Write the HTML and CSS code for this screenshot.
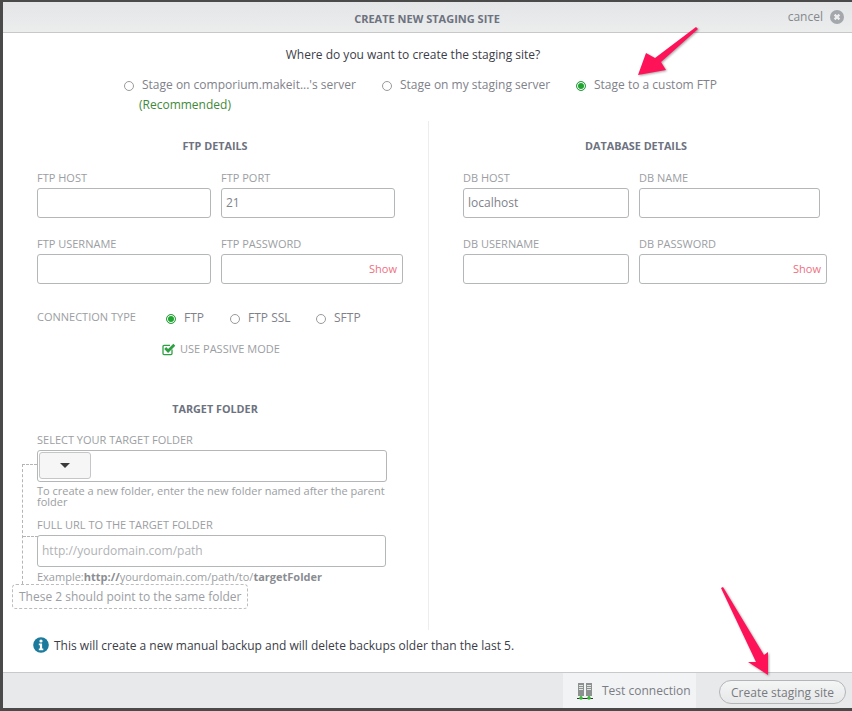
FILE: index.html
```html
<!DOCTYPE html>
<html lang="en">
<head>
<meta charset="utf-8">
<title>Create new staging site</title>
<link rel="stylesheet" href="styles.css">
</head>
<body>
<div class="modal">
  <header class="head">
    <h1 class="title">CREATE NEW STAGING SITE</h1>
    <div class="cancel">cancel
      <svg class="cancel-icon" width="14" height="14" viewBox="0 0 14 14"><circle cx="7" cy="7" r="7" fill="#a4a7ab"/><path d="M4.6 4.6l4.8 4.8M9.4 4.6l-4.8 4.8" stroke="#eee" stroke-width="2.2"/></svg>
    </div>
  </header>
  <main class="body">
    <p class="question">Where do you want to create the staging site?</p>
    <div class="options">
      <div class="option opt-a">
        <label class="radio-row"><span class="radio"></span>Stage on comporium.makeit...'s server</label>
        <div class="rec">(Recommended)</div>
      </div>
      <label class="radio-row opt-b"><span class="radio"></span>Stage on my staging server</label>
      <label class="radio-row opt-c"><span class="radio on"></span>Stage to a custom FTP</label>
    </div>
    <div class="columns">
      <section class="col-left">
        <h2 class="sec sec-ftp">FTP DETAILS</h2>
        <div class="row r1">
          <div class="field w174"><label>FTP HOST</label><div class="input"></div></div>
          <div class="field w174"><label>FTP PORT</label><div class="input">21</div></div>
        </div>
        <div class="row r2">
          <div class="field w174"><label>FTP USERNAME</label><div class="input"></div></div>
          <div class="field w182"><label>FTP PASSWORD</label><div class="input"><span class="show">Show</span></div></div>
        </div>
        <div class="conn">
          <span class="conn-label">CONNECTION TYPE</span>
          <label class="radio-row c1"><span class="radio on"></span>FTP</label>
          <label class="radio-row c2"><span class="radio"></span>FTP SSL</label>
          <label class="radio-row c3"><span class="radio"></span>SFTP</label>
        </div>
        <div class="passive">
          <svg class="check" width="14" height="13" viewBox="0 0 14 13"><path d="M10 6.5V10.6a1 1 0 0 1-1 1H2a1 1 0 0 1-1-1V3.4a1 1 0 0 1 1-1h6" fill="none" stroke="#2ea043" stroke-width="1.3"/><path d="M3.2 5l2.9 2.9 6.2-6.2" fill="none" stroke="#2ea043" stroke-width="2.8"/></svg>
          USE PASSIVE MODE
        </div>
        <h2 class="sec sec-target">TARGET FOLDER</h2>
        <div class="target">
          <label class="t-label">SELECT YOUR TARGET FOLDER</label>
          <div class="input folder"><span class="drop"><span class="caret"></span></span></div>
          <p class="hint">To create a new folder, enter the new folder named after the parent folder</p>
          <label class="t-label url-label">FULL URL TO THE TARGET FOLDER</label>
          <div class="input url">http://yourdomain.com/path</div>
          <p class="example">Example:<b>http://</b>yourdomain.com/path/to/<b>targetFolder</b></p>
          <div class="bracket"></div>
          <div class="note">These 2 should point to the same folder</div>
        </div>
      </section>
      <section class="col-right">
        <h2 class="sec sec-db">DATABASE DETAILS</h2>
        <div class="row r1 db">
          <div class="field w166"><label>DB HOST</label><div class="input">localhost</div></div>
          <div class="field w181"><label>DB NAME</label><div class="input"></div></div>
        </div>
        <div class="row r2 db">
          <div class="field w166"><label>DB USERNAME</label><div class="input"></div></div>
          <div class="field w188"><label>DB PASSWORD</label><div class="input"><span class="show">Show</span></div></div>
        </div>
      </section>
    </div>
    <div class="info">
      <svg width="16" height="16" viewBox="0 0 16 16"><circle cx="8" cy="8" r="7.8" fill="#1c7a9c"/><circle cx="8" cy="4" r="1.6" fill="#fff"/><path d="M5.8 6.6h3.3v5h1.2v1.6H5.8v-1.6h1.1V8.2H5.8z" fill="#fff"/></svg>
      <span>This will create a new manual backup and will delete backups older than the last 5.</span>
    </div>
  </main>
  <footer class="foot">
    <div class="test">
      <svg width="16" height="17" viewBox="0 0 16 17"><rect x="1" y="0" width="6" height="13" fill="#8d9190"/><rect x="9" y="0" width="6" height="13" fill="#8d9190"/><path d="M2 2.5h4M2 4.5h4M2 6.5h4M10 2.5h4M10 4.5h4M10 6.5h4" stroke="#e4e6e6"/><path d="M4 13v2M12 13v2" stroke="#555"/><path d="M0 15.5h16" stroke="#333"/><circle cx="4" cy="15" r="1.8" fill="#2fc22f"/><circle cx="12" cy="15" r="1.8" fill="#2fc22f"/></svg>
      <span>Test connection</span>
    </div>
    <button class="create">Create staging site</button>
  </footer>
</div>
<svg class="arrow arrow-top" width="62" height="50" viewBox="0 0 62 50"><path d="M59 0L61 2L24 35L29 43L1 48L9 26L18 31Z" fill="#ff1358"/></svg>
<svg class="arrow arrow-bottom" width="50" height="90" viewBox="0 0 50 90"><path d="M0 1L2 0L43 68L47 65L47 88L27 75L35 75Z" fill="#ff1358"/></svg>
</body>
</html>
```
FILE: styles.css
```css
* { box-sizing: border-box; }
html, body { margin: 0; height: 711px; overflow: hidden; }
body {
  background: #4a4a4a;
  padding: 2px 0 3px 3px;
  font-family: "Open Sans", sans-serif;
  font-size: 12px;
  color: #7a7d85;
  position: relative;
}
.modal { height: 706px; background: #fff; display: flex; flex-direction: column; }
.head {
  height: 31px;
  flex: none;
  background: linear-gradient(#e3e5e7, #eceded);
  border-bottom: 1px solid #c6c8ca;
  display: flex;
  align-items: center;
  justify-content: center;
  position: relative;
}
.title { margin: 3px 1px 0 0; font-size: 11px; line-height: 14px; font-weight: 700; color: #6d7280; }
.cancel {
  position: absolute;
  right: 8px;
  top: 7px;
  font-size: 12px;
  line-height: 16px;
  color: #85888d;
  display: flex;
  align-items: center;
  gap: 7px;
}
.body { flex: 1; display: flex; flex-direction: column; min-height: 0; }
.question { margin: 13px 0 0; text-align: center; padding-right: 29px; font-size: 12px; line-height: 17px; color: #3b3d48; }
.options { display: flex; height: 39px; margin-top: 13px; }
.radio-row { display: flex; align-items: center; font-size: 12px; line-height: 17px; color: #7f828a; height: 17px; }
.radio {
  width: 10px;
  height: 10px;
  border: 1px solid #9a9a9a;
  border-radius: 50%;
  background: #fff;
  margin-right: 8px;
  flex: none;
  position: relative;
  top: 1px;
}
.radio.on { border-color: #2ea043; background: #1fa52f; box-shadow: inset 0 0 0 1px #fff; }
.opt-a { margin-left: 121px; width: 258px; }
.opt-b { margin-left: 0; width: 194px; align-self: flex-start; }
.opt-c { align-self: flex-start; }
.rec { margin: 3px 0 0 15px; font-size: 12px; line-height: 17px; color: #3f8a3a; }
.columns { display: flex; height: 509px; margin-top: 6px; }
.col-left { width: 426px; border-right: 1px solid #eceded; padding-left: 34px; flex: none; }
.col-right { padding-left: 34px; flex: 1; }
.sec { margin: 0; font-size: 10.8px; line-height: 14px; font-weight: 700; color: #6d7280; text-align: center; }
.sec-ftp { padding-top: 18px; width: 356px; height: 32px; }
.sec-db { padding-top: 18px; width: 346px; height: 32px; }
.row { display: flex; gap: 10px; }
.r1 { margin-top: 18px; }
.r2 { margin-top: 19px; }
.field { flex: none; }
.field label, .t-label { display: block; font-size: 11px; line-height: 14px; color: #9b9ea2; height: 17px; }
.w174 { width: 174px; }
.w182 { width: 182px; }
.w166 { width: 166px; }
.w181 { width: 181px; }
.w188 { width: 188px; }
.input {
  height: 30px;
  border: 1px solid #b3b7b8;
  border-radius: 3px;
  background: #fff;
  padding: 0 4px;
  font-size: 12px;
  line-height: 28px;
  color: #80838b;
  position: relative;
  text-align: left;
}
.show { position: absolute; right: 5px; top: 0; font-size: 11px; color: #ee6f82; }
.conn { display: flex; align-items: center; margin-top: 24px; height: 17px; position: relative; }
.conn-label { font-size: 11px; color: #9b9ea2; width: 129px; flex: none; }
.conn .radio-row { font-size: 12px; padding-top: 2px; }
.c1 { width: 64px; }
.c2 { width: 86px; }
.conn .radio { margin-right: 8px; }
.passive { display: flex; align-items: center; gap: 4px; margin: 16px 0 0 125px; font-size: 11px; line-height: 14px; color: #9b9ea2; height: 16px; }
.sec-target { width: 356px; margin-top: 45px; }
.target { position: relative; margin-top: 17px; width: 350px; }
.folder { height: 32px; width: 350px; }
.drop {
  position: absolute;
  left: 1px;
  top: 1px;
  width: 52px;
  height: 27px;
  border: 1px solid #c4c6c8;
  border-radius: 3px;
  background: #f6f6f6;
  display: flex;
  align-items: center;
  justify-content: center;
}
.caret { width: 0; height: 0; border: 5px solid transparent; border-top-color: #3b3b3b; border-bottom: 0; }
.hint { margin: 3px 0 0; font-size: 11px; line-height: 11px; color: #9b9ea2; width: 350px; }
.url-label { margin-top: 11px; }
.url { height: 32px; width: 349px; color: #b0b2b5; line-height: 30px; }
.example { margin: 3px 0 0; font-size: 11px; line-height: 14px; color: #9b9ea2; }
.example b { color: #8a8d92; }
.bracket {
  position: absolute;
  left: -15px;
  top: 31px;
  width: 15px;
  height: 120px;
  border: 1px dashed #b5b5b5;
  border-right: 0;
  border-bottom: 0;
}
.bracket::after {
  content: "";
  position: absolute;
  left: 0;
  top: 71px;
  width: 15px;
  border-top: 1px dashed #b5b5b5;
}
.note {
  position: absolute;
  left: -25px;
  top: 151px;
  height: 25px;
  width: 236px;
  border: 1px dashed #bdbdbd;
  border-radius: 4px;
  padding-left: 6px;
  font-size: 12px;
  line-height: 23px;
  color: #9b9ea2;
  white-space: nowrap;
}
.info { display: flex; align-items: center; gap: 5px; margin: 5px 0 0 30px; height: 20px; font-size: 12px; color: #3b3d48; }
.foot {
  margin-top: auto;
  height: 36px;
  flex: none;
  background: #e8e9eb;
  border-top: 1px solid #c8c9cb;
  display: flex;
  justify-content: flex-end;
  padding-right: 6px;
}
.test {
  width: 133px;
  height: 35px;
  background: #f2f3f4;
  display: flex;
  align-items: center;
  gap: 9px;
  padding: 2px 0 0 14px;
  font-size: 12px;
  color: #7a7d85;
  margin-right: 23px;
  white-space: nowrap;
}
.test span { position: relative; top: -1px; }
.create {
  width: 127px;
  height: 24px;
  margin-top: 7px;
  border: 1px solid #b3b5b7;
  border-radius: 12px;
  background: linear-gradient(#f4f5f5, #e6e7e8);
  font-family: "Open Sans", sans-serif;
  font-size: 12px;
  color: #777a80;
  padding: 0;
}
.arrow { position: absolute; filter: drop-shadow(1px 1px 1px rgba(0,0,0,.35)); }
.arrow-top { left: 637px; top: 27px; }
.arrow-bottom { left: 721px; top: 587px; }
```
